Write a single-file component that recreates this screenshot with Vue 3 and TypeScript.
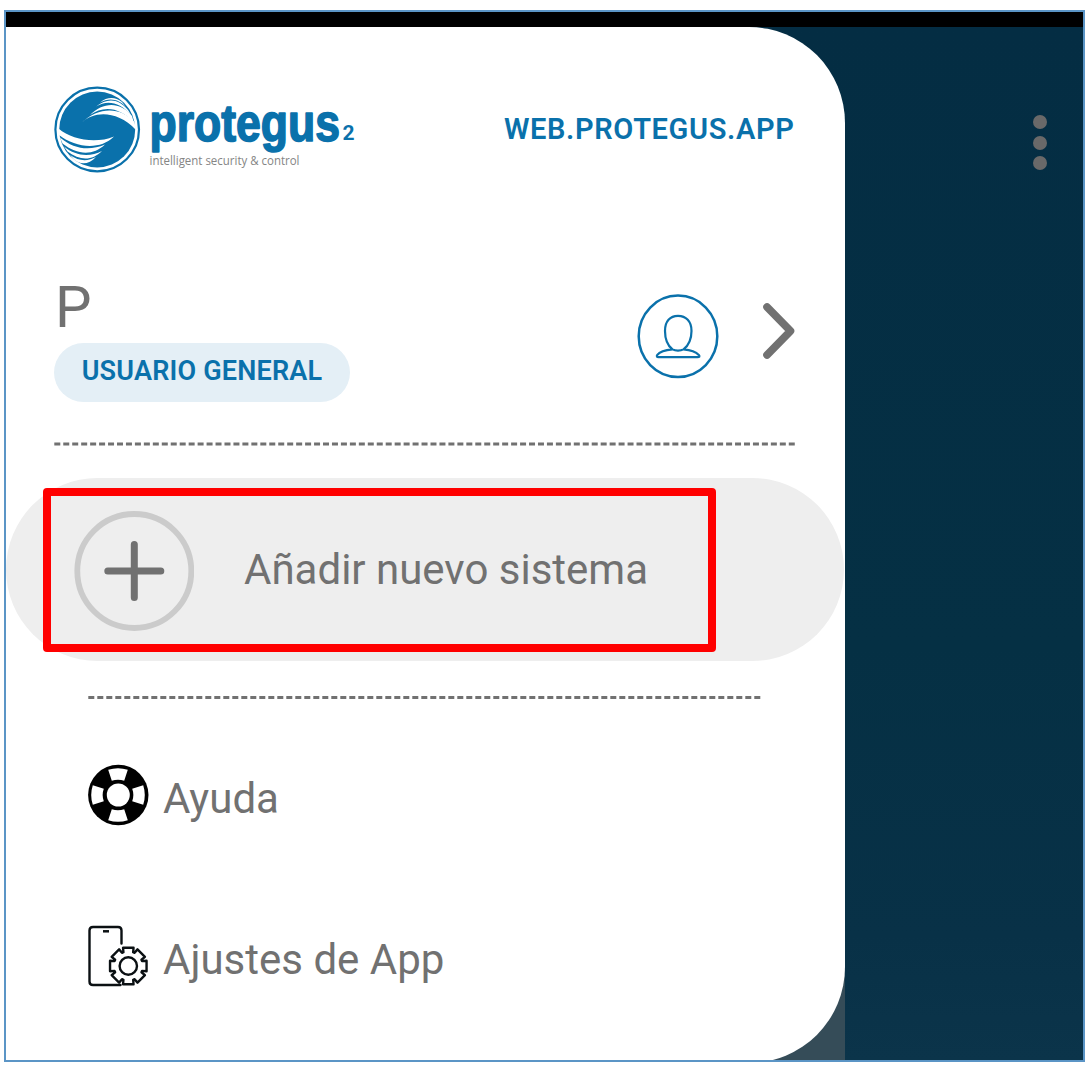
<script setup lang="ts">
interface MenuEntry {
  id: 'help' | 'settings'
  label: string
}

const entries: MenuEntry[] = [
  { id: 'help', label: 'Ayuda' },
  { id: 'settings', label: 'Ajustes de App' },
]

const rayAngles: number[] = [0, 90, 180, 270]

// Outline of an eight-toothed cog centred on the origin
function gearPath(teeth: number, outer: number, inner: number): string {
  const points: string[] = []
  const step = (Math.PI * 2) / teeth
  for (let i = 0; i < teeth; i++) {
    const a = i * step - Math.PI / 2
    const corners: [number, number][] = [
      [inner, -0.34],
      [outer, -0.28],
      [outer, 0.28],
      [inner, 0.34],
    ]
    for (const [r, d] of corners) {
      points.push(`${(r * Math.cos(a + d)).toFixed(2)} ${(r * Math.sin(a + d)).toFixed(2)}`)
    }
  }
  return `M${points.join('L')}Z`
}

const gear = gearPath(8, 19, 14.6)
</script>

<template>
  <main class="frame">
    <div class="status-bar"></div>
    <div class="screen">
      <div class="drawer-wrap">
        <aside class="drawer">
          <header class="brand-row">
            <svg class="logo" width="304" height="90" viewBox="0 0 304 90">
              <circle cx="43.2" cy="44.5" r="41.8" fill="#fff" stroke="#0a71ab" stroke-width="2.2" />
              <circle cx="43.2" cy="44.5" r="38" fill="#0a71ab" />
              <g fill="#fff">
                <path d="M28 37.500C40 26 63 25 82 45L80.500 37C66 21 44 22 28 37.500Z" />
                <path d="M36 30C49 20.500 66 21.500 80 38L78 31C66 16 49 17 36 30Z" />
                <path d="M42 21.500C53 14.500 66 17 77 30L74 25C64 13 53 13 42 21.500Z" />
                <path d="M46 17.500C56 12 65 14.500 72 22L68 17C61 11.500 53 12 46 17.500Z" />
                <path d="M4.500 43.500C18 55 42 59 60 51.500C46 65.500 22 63 5 50Z" />
                <path d="M6 52.500C20 64.500 36 66 51 59.500C39 71 23 70 8.500 58.500Z" />
                <path d="M10 61.500C22 71.500 36 72 48 66C38 76 26 76 13.500 66.500Z" />
                <path d="M16 70C25 76.500 34 76.500 42 72C35 80 26 80 20 74.500Z" />
              </g>
              <text class="word" x="95.500" y="56" textLength="190.500" lengthAdjust="spacingAndGlyphs">protegus</text>
              <text class="two" x="288.500" y="55">2</text>
              <text class="tag" x="95.500" y="79.500" textLength="150" lengthAdjust="spacingAndGlyphs">intelligent security &amp; control</text>
            </svg>
            <a class="web">WEB.PROTEGUS.APP</a>
          </header>

          <section class="profile">
            <div class="who">
              <div class="name">P</div>
              <div class="role">USUARIO GENERAL</div>
            </div>
            <svg class="avatar" width="82" height="86" viewBox="0 0 82 86" fill="none" stroke="#0a71ab">
              <ellipse cx="41" cy="43.3" rx="39.300" ry="40.700" stroke-width="2.500" />
              <path transform="translate(0 .4)" d="M35.500 56C30.500 52 28 45 28 37.500C28 28 33 22.500 41 22.500S54.500 28 54.500 37.500C54.500 45 51.500 52 46.500 56C43.500 57.600 38.500 57.600 35.500 56ZM35.500 56C30 56.500 23 58 20.300 61.500C19.300 63 20 63.800 21.500 63.800H60.500C62.500 63.800 63 63 61.800 61.500C58.500 58 52 56.500 46.500 56" stroke-width="2.200" stroke-linejoin="round" />
            </svg>
            <svg class="chevron" width="34" height="58" viewBox="0 0 34 58">
              <path d="M5 5L28.500 29L5 53" fill="none" stroke="#717171" stroke-width="7.600" stroke-linecap="round" stroke-linejoin="round" />
            </svg>
          </section>

          <svg class="rule" width="741" height="4" viewBox="0 0 741 4">
            <path d="M.3 2H741" stroke="#717171" stroke-width="3" stroke-dasharray="6 2.957" />
          </svg>

          <button class="add">
            <svg class="plus" width="120" height="120" viewBox="0 0 120 120" fill="none">
              <circle cx="60.3" cy="60" r="57" stroke="#cbcbcb" stroke-width="5.800" />
              <path d="M60.300 33.500V86.500M33.800 60H86.800" stroke="#717171" stroke-width="7" stroke-linecap="round" />
            </svg>
            <span class="add-label">Añadir nuevo sistema</span>
            <span class="highlight"></span>
          </button>

          <svg class="rule inner" width="673" height="3" viewBox="0 0 673 3">
            <path d="M.3 1.500H673" stroke="#717171" stroke-width="3" stroke-dasharray="6 3" />
          </svg>

          <nav class="menu">
            <a v-for="entry in entries" :key="entry.id" class="entry">
              <svg v-if="entry.id === 'help'" width="62" height="62" viewBox="-31 -31 62 62">
                <circle cx=".3" r="30.200" fill="#000" />
                <path v-for="angle in rayAngles" :key="angle" :transform="`rotate(${angle})`" d="M-9.800 -25.200Q0 -28.400 9.800 -25.200L6.200 -14.200Q0 -16.500 -6.200 -14.200Z" fill="#fff" />
                <circle cx=".3" r="11.500" fill="#fff" />
              </svg>
              <svg v-else width="62" height="62" viewBox="0 0 62 62" fill="none" stroke="#0b1013" stroke-width="2.400">
                <path d="M34.500 18.500V5.500Q34.500 2 31 2H6Q2.500 2 2.500 5.500V56.500Q2.500 60 6 60H33.500" stroke-linecap="round" />
                <path d="M16 6.300H22" stroke-width="2.500" />
                <g transform="translate(41.3 41)">
                  <path :d="gear" stroke-linejoin="round" />
                  <circle r="8.700" />
                </g>
              </svg>
              <span>{{ entry.label }}</span>
            </a>
          </nav>
        </aside>
      </div>
      <div class="backdrop">
        <div class="more"><i></i><i></i><i></i></div>
      </div>
    </div>
  </main>
</template>

<style>
body {
  margin: 0;
  background: #fff;
}
</style>

<style scoped>
.frame {
  box-sizing: border-box;
  width: 1081px;
  height: 1052px;
  margin: 10px 0 0 4px;
  border: 2px solid #5b95c6;
  overflow: hidden;
  display: flex;
  flex-direction: column;
  font-family: Roboto, 'Liberation Sans', sans-serif;
  color: #717171;
}
.status-bar {
  height: 15px;
  flex: none;
  background: #000;
}
.screen {
  flex: 1;
  min-height: 0;
  display: flex;
  background: linear-gradient(180deg, #042d43 0%, #053044 60%, #083147 88%, #0b344a 100%);
}
.drawer-wrap {
  width: 838.500px;
  flex: none;
  background: linear-gradient(180deg, transparent 50%, #354c58 50%);
}
.drawer {
  box-sizing: border-box;
  height: 1036px;
  padding-top: 57px;
  background: #fff;
  border-radius: 0 96px 96px 0;
}
.brand-row {
  display: flex;
  justify-content: space-between;
  align-items: flex-start;
  height: 201px;
  padding: 0 50px 0 48px;
}
.logo {
  flex: none;
  margin-top: 0.500px;
}
.word {
  font: 700 51px 'Liberation Sans', sans-serif;
  fill: #0a71ab;
  stroke: #0a71ab;
  stroke-width: 1.600px;
  stroke-linejoin: round;
}
.two {
  font: 700 21px Roboto, sans-serif;
  fill: #0a71ab;
}
.tag {
  font: 400 13px 'Open Sans', sans-serif;
  fill: #858585;
}
.web {
  margin-top: 28px;
  font-size: 29px;
  line-height: 34px;
  font-weight: 600;
  letter-spacing: 0.650px;
  color: #0a71ab;
  white-space: nowrap;
}
.profile {
  display: flex;
  align-items: flex-start;
  height: 157px;
  padding: 0 49px 0 48px;
}
.who {
  flex: 1;
}
.name {
  height: 58px;
  padding-left: 1px;
  font-size: 58px;
  line-height: 44px;
}
.role {
  box-sizing: border-box;
  width: 296px;
  height: 59px;
  border-radius: 30px;
  background: #e4eff6;
  color: #0a71ab;
  font-size: 27px;
  line-height: 57px;
  font-weight: 600;
  letter-spacing: 0.200px;
  text-align: center;
  white-space: nowrap;
}
.avatar {
  margin: 8px 43px 0 0;
}
.chevron {
  margin-top: 17px;
}
.rule {
  display: block;
  margin-left: 48px;
}
.rule.inner {
  margin: 35px 0 0 82px;
}
.add {
  position: relative;
  display: flex;
  align-items: center;
  width: 838px;
  height: 183px;
  margin: 32px 0 0;
  padding: 2px 0 0 68px;
  border: 0;
  border-radius: 92px;
  background: #eee;
  color: #717171;
  font: 400 42px Roboto, sans-serif;
}
.add-label {
  margin: -2px 0 0 50px;
  white-space: nowrap;
}
.highlight {
  position: absolute;
  left: 37px;
  top: 10px;
  box-sizing: border-box;
  width: 673px;
  height: 164px;
  border: 8px solid #f00;
  border-radius: 4px;
}
.menu {
  display: flex;
  flex-direction: column;
  gap: 99px;
  padding: 65px 0 0 81px;
}
.entry {
  display: flex;
  align-items: center;
  height: 62px;
  gap: 14px;
  font-size: 42px;
}
.entry span {
  padding-top: 7px;
  white-space: nowrap;
}
.backdrop {
  flex: 1;
  display: flex;
  justify-content: flex-end;
  align-items: flex-start;
}
.more {
  display: flex;
  flex-direction: column;
  gap: 6.500px;
  padding: 88px 36px 0 0;
}
.more i {
  width: 14px;
  height: 14px;
  border-radius: 50%;
  background: #696969;
}
</style>
